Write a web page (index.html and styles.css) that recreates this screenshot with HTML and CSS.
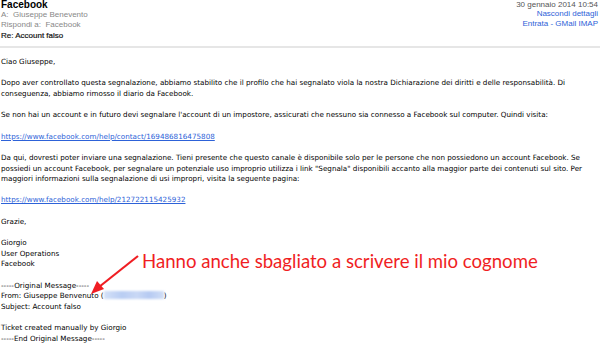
FILE: index.html
```html
<!DOCTYPE html>
<html lang="it">
<head>
<meta charset="utf-8">
<link rel="stylesheet" href="styles.css">
</head>
<body>
<div class="mail">
  <header class="head">
    <div class="head-left">
      <div class="from">Facebook</div>
      <div class="meta">A:&nbsp; Giuseppe Benevento</div>
      <div class="meta">Rispondi a:&nbsp; Facebook</div>
      <div class="subject">Re: Account falso</div>
    </div>
    <div class="head-right">
      <div class="date">30 gennaio 2014 10:54</div>
      <div class="link-sm">Nascondi dettagli</div>
      <div class="link-sm">Entrata - GMail IMAP</div>
    </div>
  </header>
  <div class="sep"></div>
  <main class="body">
    <p>Ciao Giuseppe,</p>
    <p>Dopo aver controllato questa segnalazione, abbiamo stabilito che il profilo che hai segnalato viola la nostra Dichiarazione dei diritti e delle responsabilità. Di<br>conseguenza, abbiamo rimosso il diario da Facebook.</p>
    <p>Se non hai un account e in futuro devi segnalare l'account di un impostore, assicurati che nessuno sia connesso a Facebook sul computer. Quindi visita:</p>
    <p><a class="lnk">https://www.facebook.com/help/contact/169486816475808</a></p>
    <p>Da qui, dovresti poter inviare una segnalazione. Tieni presente che questo canale è disponibile solo per le persone che non possiedono un account Facebook. Se<br>possiedi un account Facebook, per segnalare un potenziale uso improprio utilizza i link "Segnala" disponibili accanto alla maggior parte dei contenuti sul sito. Per<br>maggiori informazioni sulla segnalazione di usi impropri, visita la seguente pagina:</p>
    <p><a class="lnk">https://www.facebook.com/help/212722115425932</a></p>
    <p>Grazie,</p>
    <p>Giorgio<br>User Operations<br>Facebook</p>
    <p>-----Original Message-----<br>From: Giuseppe Benvenuto (<span class="blur"></span>)<br>Subject: Account falso</p>
    <p>Ticket created manually by Giorgio<br>-----End Original Message-----</p>
  </main>
  <div class="note">Hanno anche sbagliato a scrivere il mio cognome</div>
  <svg class="arrow" width="60" height="45" viewBox="0 0 60 45">
    <line x1="49" y1="2" x2="10" y2="33" stroke="#f01e23" stroke-width="2.2"/>
    <polygon points="2,40 8,27 15,35" fill="#f01e23"/>
  </svg>
</div>
</body>
</html>
```
FILE: styles.css
```css
html, body {
  margin: 0;
  padding: 0;
  background: #fff;
}
.mail {
  position: relative;
  width: 600px;
  height: 348px;
  overflow: hidden;
}
.head {
  display: flex;
  justify-content: space-between;
  font-family: "Liberation Sans", Arial, sans-serif;
  font-size: 8px;
  line-height: 10.3px;
  padding: 0 2px 0 1px;
  height: 41px;
}
.from {
  font-weight: bold;
  font-size: 10px;
  line-height: 10px;
  color: #000;
}
.meta {
  color: #888;
}
.subject {
  color: #111;
  -webkit-text-stroke: 0.2px #111;
}
.head-right {
  text-align: right;
}
.date {
  color: #555;
  line-height: 9px;
}
.link-sm {
  color: #2d62d8;
}
.sep {
  height: 2px;
  background: #e6e6e6;
  margin-top: 5px;
}
.body {
  font-family: "DejaVu Sans", Verdana, sans-serif;
  font-size: 7.2px;
  line-height: 10.65px;
  color: #000;
  padding: 9px 0 0 1px;
  white-space: nowrap;
}
.body p {
  margin: 0 0 10.65px 0;
}
.lnk {
  color: #2d62d8;
  text-decoration: underline;
}
.blur {
  display: inline-block;
  width: 60px;
  height: 8px;
  vertical-align: -1px;
  background: linear-gradient(90deg, #d4e1f7, #b9cdf3 30%, #c9d8f5 55%, #b6caf2 75%, #d0def6);
  filter: blur(0.8px);
}
.note {
  position: absolute;
  left: 142px;
  top: 249px;
  font-family: Lato, "Open Sans", sans-serif;
  font-size: 18.6px;
  line-height: 24px;
  color: #f01e23;
  white-space: nowrap;
}
.arrow {
  position: absolute;
  left: 89px;
  top: 254px;
}
```
